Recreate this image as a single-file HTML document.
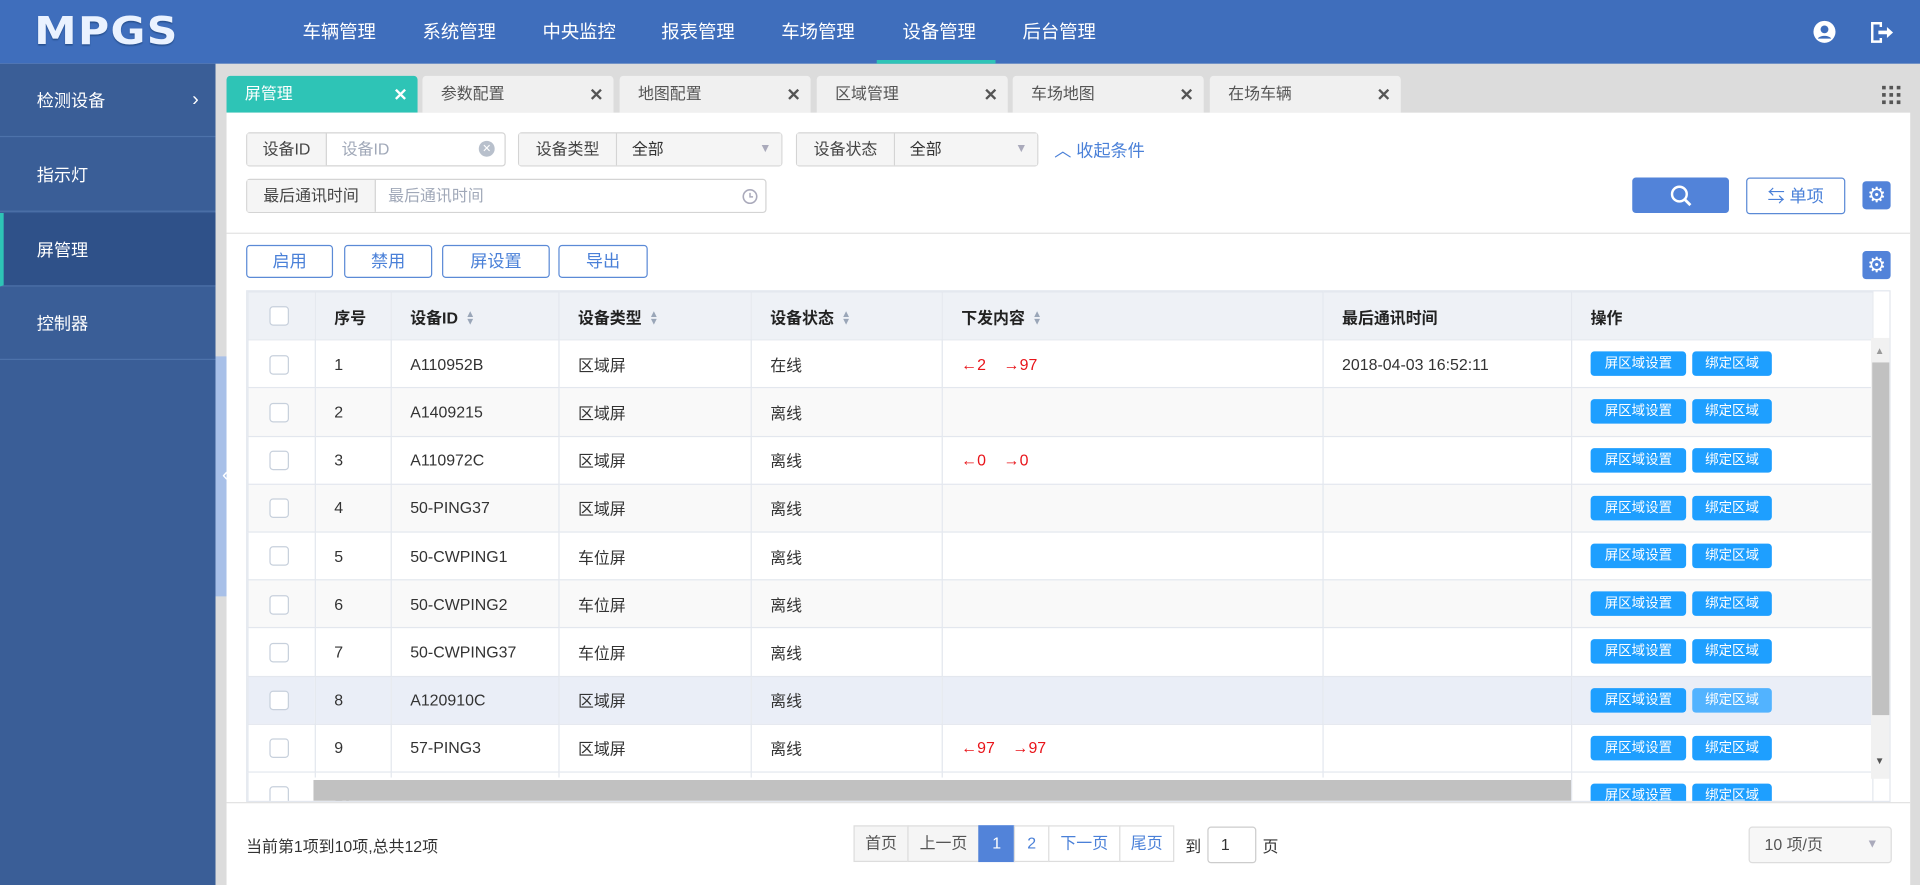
<!DOCTYPE html>
<html><head><meta charset="utf-8"><style>
*{box-sizing:border-box;margin:0;padding:0}
html,body{width:1920px;height:885px;overflow:hidden;background:#dcdcdc}
body{font-family:"Liberation Sans","Noto Sans CJK SC",sans-serif;}
#r{position:absolute;left:0;top:0;width:1568px;height:723px;transform:scale(1.22449);transform-origin:0 0;font-size:13px;color:#333}
.a{position:absolute}
.hdr{left:0;top:0;width:1568px;height:52px;background:#3f6ebc}
.nav{top:0;height:52px;line-height:54px;color:#fff;font-size:15px}
.side{left:0;top:52px;width:176px;height:671px;background:#3a5e97}
.si{position:absolute;left:0;width:176px;height:60px;line-height:60px;padding-left:30px;color:#fff;font-size:14px;border-bottom:1px solid #4d72aa}
.tab{top:62px;height:30px;width:156px;background:#f0f0f0;border-radius:3px 3px 0 0;line-height:30px;padding-left:15px;color:#555;font-size:13px}
.tab b{position:absolute;right:8px;top:0;font-weight:bold;color:#555;font-size:14px}
.panel{left:185px;top:92px;width:1375px;height:631px;background:#fff}
.grp{height:28px;border:1px solid #d4d4d4;border-radius:3px;display:flex;font-size:13px;line-height:26px;background:#fff}
.grp .l{background:#f5f5f5;border-right:1px solid #d4d4d4;text-align:center;color:#444;flex:none}
.btn{top:200px;height:27px;border:1px solid #5b8ad6;border-radius:3px;color:#4a80d8;text-align:center;line-height:25px;font-size:14px;background:#fff}
.gear{width:23px;height:23px;background:#5283d9;border-radius:3px;color:#fff;text-align:center;line-height:23px;font-size:17px}
table{border-collapse:collapse;table-layout:fixed;font-size:13px}
td,th{border:1px solid #e3e7ee;height:39.2px;padding:0 15px;text-align:left;white-space:nowrap;overflow:hidden;color:#333}
th{background:#eef1f6;font-weight:bold;color:#222}
.cb{display:inline-block;width:16px;height:16px;border:1px solid #c7d0dc;border-radius:3px;background:#fff;vertical-align:middle}
.sort{display:inline-block;margin-left:6px;color:#9aa6b8;font-size:8px;line-height:6px;vertical-align:middle}
.ob{display:inline-block;height:20px;line-height:20px;text-align:center;background:#1e9fff;color:#fff;font-size:11px;border-radius:3px;margin-right:5px}
.o1{width:78px}.o2{width:65px}
.red{color:#e8141a}
.pg{top:674px;height:30px;border:1px solid #ddd;line-height:28px;text-align:center;font-size:13px;background:#fff}
</style></head><body><div id="r">
<div class="a hdr"></div>
<div class="a" style="left:28px;top:8px;font-size:31px;font-weight:bold;color:#eaf2ff;letter-spacing:1px;font-family:'DejaVu Sans',sans-serif;text-shadow:0 1px 1px #27508f;transform:scaleX(1.12);transform-origin:0 0">MPGS</div>
<div class="a nav" style="left:247px">车辆管理</div>
<div class="a nav" style="left:345px">系统管理</div>
<div class="a nav" style="left:443px">中央监控</div>
<div class="a nav" style="left:540px">报表管理</div>
<div class="a nav" style="left:638px">车场管理</div>
<div class="a nav" style="left:737px">设备管理</div>
<div class="a nav" style="left:835px">后台管理</div>
<div class="a" style="left:716px;top:49px;width:97px;height:3px;background:#2ec4b6"></div>
<svg class="a" style="left:1480px;top:16px" width="20" height="20" viewBox="0 0 20 20"><circle cx="10" cy="10" r="9" fill="#fff"/><circle cx="10" cy="8" r="3.2" fill="#3f6ebc"/><path d="M4.5 15.5c1.5-3 9.5-3 11 0" fill="#3f6ebc"/></svg>
<svg class="a" style="left:1526px;top:17px" width="22" height="19" viewBox="0 0 22 19"><path d="M2 1h9v4h-2V3H4v13h5v-2h2v4H2z" fill="#fff"/><path d="M8 8h7V5l5 4.5-5 4.5v-3H8z" fill="#fff"/></svg>

<div class="a side"></div>
<div class="si" style="top:52px">检测设备<span style="position:absolute;left:157px;font-size:16px">›</span></div>
<div class="si" style="top:113px">指示灯</div>
<div class="si" style="top:174px;background:#2f5189;border-left:3px solid #2ec4b6;padding-left:27px">屏管理</div>
<div class="si" style="top:234px">控制器</div>
<div class="a" style="left:176px;top:291px;width:16px;height:196px;background:#a8c0e8;border-radius:0 4px 4px 0;color:#fff;line-height:196px;text-align:center;font-size:16px">‹</div>

<div class="a tab" style="left:185px;background:#2ec4b6;color:#fff">屏管理<b style="color:#fff">✕</b></div>
<div class="a tab" style="left:345px">参数配置<b>✕</b></div>
<div class="a tab" style="left:506px">地图配置<b>✕</b></div>
<div class="a tab" style="left:667px">区域管理<b>✕</b></div>
<div class="a tab" style="left:827px">车场地图<b>✕</b></div>
<div class="a tab" style="left:988px">在场车辆<b>✕</b></div>
<svg class="a" style="left:1537px;top:70px" width="16" height="16"><g fill="#555"><rect x="0" y="0" width="3" height="3"/><rect x="6" y="0" width="3" height="3"/><rect x="12" y="0" width="3" height="3"/><rect x="0" y="6" width="3" height="3"/><rect x="6" y="6" width="3" height="3"/><rect x="12" y="6" width="3" height="3"/><rect x="0" y="12" width="3" height="3"/><rect x="6" y="12" width="3" height="3"/><rect x="12" y="12" width="3" height="3"/></g></svg>

<div class="a panel"></div>
<div class="a grp" style="left:201px;top:108px;width:212px"><span class="l" style="width:65px">设备ID</span><span style="color:#a0a8b8;padding-left:12px;flex:1">设备ID</span><span style="width:13px;height:13px;border-radius:50%;background:#b8c0cc;color:#fff;font-size:9px;line-height:13px;text-align:center;margin:6px 8px 0 0">✕</span></div>
<div class="a grp" style="left:423px;top:108px;width:216px"><span class="l" style="width:80px">设备类型</span><span style="background:#f5f5f5;padding-left:12px;flex:1">全部</span><span style="position:absolute;right:8px;color:#aab;font-size:10px">▼</span></div>
<div class="a grp" style="left:650px;top:108px;width:198px"><span class="l" style="width:80px">设备状态</span><span style="background:#f5f5f5;padding-left:12px;flex:1">全部</span><span style="position:absolute;right:8px;color:#aab;font-size:10px">▼</span></div>
<div class="a" style="left:861px;top:113px;color:#4a80d8;font-size:14px">︿ 收起条件</div>
<div class="a grp" style="left:201px;top:146px;width:425px"><span class="l" style="width:105px">最后通讯时间</span><span style="color:#a0a8b8;padding-left:10px;flex:1">最后通讯时间</span><svg style="margin:7px 6px 0 0" width="13" height="13"><circle cx="6.5" cy="6.5" r="5.5" fill="none" stroke="#aab" stroke-width="1.3"/><path d="M6.5 3.5v3.3h2.5" stroke="#aab" fill="none" stroke-width="1.2"/></svg></div>
<div class="a" style="left:1333px;top:145px;width:79px;height:29px;background:#5283d9;border-radius:3px"><svg style="margin:6px 0 0 31px" width="18" height="18"><circle cx="7.5" cy="7.5" r="6" fill="none" stroke="#fff" stroke-width="2"/><path d="M12 12l4.5 4.5" stroke="#fff" stroke-width="2.3"/></svg></div>
<div class="a" style="left:1426px;top:145px;width:81px;height:30px;border:1px solid #5b8ad6;border-radius:3px;color:#4a80d8;font-size:14px;line-height:28px;text-align:center">⇆ 单项</div>
<div class="a gear" style="left:1521px;top:148px">⚙</div>
<div class="a" style="left:185px;top:190px;width:1375px;height:1px;background:#e2e2e2"></div>

<div class="a btn" style="left:201px;width:71px">启用</div>
<div class="a btn" style="left:281px;width:72px">禁用</div>
<div class="a btn" style="left:361px;width:88px">屏设置</div>
<div class="a btn" style="left:456px;width:73px">导出</div>
<div class="a gear" style="left:1521px;top:205px">⚙</div>

<div class="a" style="left:201px;top:237px;width:1343px;height:418px;overflow:hidden;border:1px solid #e3e7ee">
<table style="width:1327px">
<colgroup><col style="width:55px"><col style="width:62px"><col style="width:137px"><col style="width:157px"><col style="width:156px"><col style="width:311px"><col style="width:203px"><col style="width:246px"></colgroup>
<tr><th style="padding-left:17px"><span class="cb"></span></th><th>序号</th><th>设备ID<span class="sort">▲<br>▼</span></th><th>设备类型<span class="sort">▲<br>▼</span></th><th>设备状态<span class="sort">▲<br>▼</span></th><th>下发内容<span class="sort">▲<br>▼</span></th><th>最后通讯时间</th><th>操作</th></tr>
<tr><td style="padding-left:17px"><span class="cb"></span></td><td>1</td><td>A110952B</td><td>区域屏</td><td>在线</td><td class="red">←2 &nbsp;&nbsp; →97</td><td>2018-04-03 16:52:11</td><td><span class="ob o1">屏区域设置</span><span class="ob o2">绑定区域</span></td></tr>
<tr style="background:#f9f9f9"><td style="padding-left:17px"><span class="cb"></span></td><td>2</td><td>A1409215</td><td>区域屏</td><td>离线</td><td></td><td></td><td><span class="ob o1">屏区域设置</span><span class="ob o2">绑定区域</span></td></tr>
<tr><td style="padding-left:17px"><span class="cb"></span></td><td>3</td><td>A110972C</td><td>区域屏</td><td>离线</td><td class="red">←0 &nbsp;&nbsp; →0</td><td></td><td><span class="ob o1">屏区域设置</span><span class="ob o2">绑定区域</span></td></tr>
<tr style="background:#f9f9f9"><td style="padding-left:17px"><span class="cb"></span></td><td>4</td><td>50-PING37</td><td>区域屏</td><td>离线</td><td></td><td></td><td><span class="ob o1">屏区域设置</span><span class="ob o2">绑定区域</span></td></tr>
<tr><td style="padding-left:17px"><span class="cb"></span></td><td>5</td><td>50-CWPING1</td><td>车位屏</td><td>离线</td><td></td><td></td><td><span class="ob o1">屏区域设置</span><span class="ob o2">绑定区域</span></td></tr>
<tr style="background:#f9f9f9"><td style="padding-left:17px"><span class="cb"></span></td><td>6</td><td>50-CWPING2</td><td>车位屏</td><td>离线</td><td></td><td></td><td><span class="ob o1">屏区域设置</span><span class="ob o2">绑定区域</span></td></tr>
<tr><td style="padding-left:17px"><span class="cb"></span></td><td>7</td><td>50-CWPING37</td><td>车位屏</td><td>离线</td><td></td><td></td><td><span class="ob o1">屏区域设置</span><span class="ob o2">绑定区域</span></td></tr>
<tr style="background:#eaeef7"><td style="padding-left:17px"><span class="cb"></span></td><td>8</td><td>A120910C</td><td>区域屏</td><td>离线</td><td></td><td></td><td><span class="ob o1">屏区域设置</span><span class="ob o2" style="background:#52b3ff">绑定区域</span></td></tr>
<tr><td style="padding-left:17px"><span class="cb"></span></td><td>9</td><td>57-PING3</td><td>区域屏</td><td>离线</td><td class="red">←97 &nbsp;&nbsp; →97</td><td></td><td><span class="ob o1">屏区域设置</span><span class="ob o2">绑定区域</span></td></tr>
<tr><td style="padding-left:17px"><span class="cb"></span></td><td>10</td><td></td><td></td><td></td><td></td><td></td><td><span class="ob o1">屏区域设置</span><span class="ob o2">绑定区域</span></td></tr>
</table>
<div class="a" style="left:54px;top:397px;width:1027px;height:20px;background:#fff"></div>
<div class="a" style="left:54px;top:399px;width:1027px;height:17px;background:#c1c1c1"></div>
<div class="a" style="left:1326px;top:38px;width:16px;height:360px;background:#f1f1f1"></div>
<div class="a" style="left:1327px;top:58px;width:14px;height:288px;background:#c1c1c1"></div>
<div class="a" style="left:1329px;top:44px;color:#999;font-size:8px">▲</div>
<div class="a" style="left:1329px;top:379px;color:#555;font-size:8px">▼</div>
</div>
<div class="a" style="left:185px;top:655px;width:1375px;height:1px;background:#e2e2e2"></div>

<div class="a" style="left:201px;top:681px;font-size:13px;color:#333">当前第1项到10项,总共12项</div>
<div class="a pg" style="left:697px;width:45px;background:#f5f5f5;color:#555">首页</div>
<div class="a pg" style="left:741px;width:59px;background:#f5f5f5;color:#555">上一页</div>
<div class="a pg" style="left:799px;width:30px;background:#5283d9;border-color:#5283d9;color:#fff">1</div>
<div class="a pg" style="left:828px;width:29px;color:#4a80d8">2</div>
<div class="a pg" style="left:856px;width:59px;color:#4a80d8">下一页</div>
<div class="a pg" style="left:914px;width:45px;color:#4a80d8">尾页</div>
<div class="a" style="left:968px;top:681px">到</div>
<div class="a" style="left:986px;top:675px;width:40px;height:30px;border:1px solid #ccc;border-radius:3px;line-height:28px;padding-left:10px">1</div>
<div class="a" style="left:1031px;top:681px">页</div>
<div class="a" style="left:1428px;top:675px;width:117px;height:30px;border:1px solid #ddd;border-radius:3px;background:#f7f7f7;line-height:28px;padding-left:12px;color:#555">10 项/页<span style="position:absolute;right:10px;color:#aab;font-size:10px">▼</span></div>
</div></body></html>
